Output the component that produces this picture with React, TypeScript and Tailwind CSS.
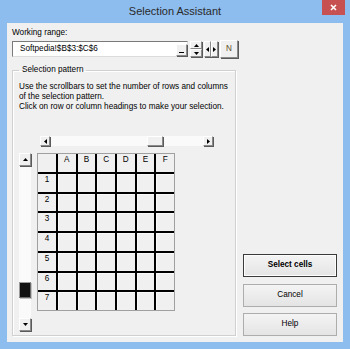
import React from "react";

const btn3d =
  "bg-[#f0f0f0] border border-t-white border-l-white border-r-[#8a8a8a] border-b-[#8a8a8a] shadow-[1px_1px_0_#5a5a5a]";

function Tri({ dir, size = 3 }: { dir: "up" | "down" | "left" | "right"; size?: number }) {
  const s = size;
  let pts = "";
  let w = s * 2 + 1;
  let h = s + 1;
  if (dir === "up") pts = `0,${h} ${w},${h} ${w / 2},0`;
  if (dir === "down") pts = `0,0 ${w},0 ${w / 2},${h}`;
  if (dir === "left" || dir === "right") {
    const t = w;
    w = h;
    h = t;
    pts = dir === "left" ? `${w},0 ${w},${h} 0,${h / 2}` : `0,0 0,${h} ${w},${h / 2}`;
  }
  return (
    <svg width={w} height={h} viewBox={`0 0 ${w} ${h}`}>
      <polygon points={pts} fill="#000" />
    </svg>
  );
}

const cols = ["A", "B", "C", "D", "E", "F"];
const rows = [1, 2, 3, 4, 5, 6, 7];

export default function App() {
  return (
    <div className="w-[350px] h-[349px] bg-[#8dbdee] flex flex-col font-['Liberation_Sans',Arial,sans-serif] text-black overflow-hidden">
      {/* title bar */}
      <div className="relative h-[23px] flex items-center justify-center shrink-0">
        <span className="text-[11px] text-[#2a2a2a] leading-none">Selection Assistant</span>
        <div className="absolute right-[5px] top-0 w-[23px] h-[15px] bg-[#c75050] flex items-center justify-center">
          <svg width="7" height="7" viewBox="0 0 7 7">
            <path d="M1 1 L6 6 M6 1 L1 6" stroke="#fff" strokeWidth="1.6" />
          </svg>
        </div>
      </div>

      {/* client area */}
      <div className="mx-[7px] mb-[7px] flex-1 bg-[#f0f0f0] px-[5px] pt-[5px] flex flex-col">
        <div className="text-[8.2px] leading-[10px]">Working range:</div>
        <div className="mt-[2px] flex items-center h-[18px]">
          <div className="w-[176px] h-[16px] bg-white border border-t-[#7a7a7a] border-l-[#7a7a7a] border-r-[#dcdcdc] border-b-[#dcdcdc] flex items-center">
            <span className="pl-[7px] text-[8.2px] leading-[10px]">Softpedia!$B$3:$C$6</span>
            <div className={`ml-auto self-end w-[11px] h-[12px] ${btn3d} flex items-end justify-center pb-[2px]`}>
              <div className="w-[5px] h-[1px] bg-black" />
            </div>
          </div>
          <div className="ml-[2px] w-[12px] h-[16px] flex flex-col">
            <div className={`h-[8px] ${btn3d} flex items-center justify-center`}>
              <Tri dir="up" size={2} />
            </div>
            <div className={`h-[8px] ${btn3d} flex items-center justify-center`}>
              <Tri dir="down" size={2} />
            </div>
          </div>
          <div className="ml-[2px] w-[14px] h-[16px] flex">
            <div className={`w-[7px] ${btn3d} flex items-center justify-center`}>
              <Tri dir="left" size={2} />
            </div>
            <div className={`w-[7px] ${btn3d} flex items-center justify-center`}>
              <Tri dir="right" size={2} />
            </div>
          </div>
          <div className={`ml-[2px] w-[18px] h-[18px] ${btn3d} flex items-center justify-center`}>
            <span className="text-[8.2px] leading-none text-[#5e4d22]">N</span>
          </div>
        </div>

        <div className="mt-[7px] flex">
          <fieldset className="w-[224px] border border-[#d0d0d0] shadow-[inset_1px_1px_0_#fff,1px_1px_0_#fff] px-[6px] pb-[4px]">
            <legend className="ml-0 px-[3px] text-[8.2px] leading-[10px]">Selection pattern</legend>
            <div className="pt-[7px] text-[8.2px] leading-[10px]">
              <div>Use the scrollbars to set the number of rows and columns</div>
              <div>of the selection pattern.</div>
              <div>Click on row or column headings to make your selection.</div>
            </div>

            {/* horizontal scrollbar */}
            <div className="mt-[24px] ml-[21px] w-[173px] h-[10px] bg-[#fafafa] flex">
              <div className={`w-[10px] h-[10px] ${btn3d} flex items-center justify-center`}>
                <Tri dir="left" size={2} />
              </div>
              <div className="flex-1 flex">
                <div className="w-[97px]" />
                <div className={`w-[16px] h-[10px] ${btn3d}`} />
              </div>
              <div className={`w-[10px] h-[10px] ${btn3d} flex items-center justify-center`}>
                <Tri dir="right" size={2} />
              </div>
            </div>

            <div className="mt-[7px] flex">
              {/* vertical scrollbar */}
              <div className="w-[12px] h-[178px] bg-[#fafafa] flex flex-col">
                <div className={`h-[13px] ${btn3d} flex items-center justify-center`}>
                  <Tri dir="up" size={2} />
                </div>
                <div className="flex-1 flex flex-col">
                  <div className="h-[116px]" />
                  <div className="h-[16px] bg-[#111] border border-t-[#9a9a9a] border-l-[#9a9a9a] border-r-[#6a6a6a] border-b-[#6a6a6a] shadow-[1px_1px_0_#c0c0c0]" />
                </div>
                <div className={`h-[13px] ${btn3d} flex items-center justify-center`}>
                  <Tri dir="down" size={2} />
                </div>
              </div>

              {/* grid */}
              <div className="ml-[6px] h-[158px] w-[138px] bg-black border border-[#a0a0a0] grid grid-cols-[18px_repeat(6,minmax(0,1fr))] grid-rows-[repeat(8,minmax(0,1fr))] gap-[2px]">
                <div className="bg-[#f0f0f0]" />
                {cols.map((c) => (
                  <div key={c} className="bg-[#f0f0f0] text-[8.2px] leading-[10px] text-center pt-[1px]">
                    {c}
                  </div>
                ))}
                {rows.map((r) => (
                  <React.Fragment key={r}>
                    <div className="bg-[#f0f0f0] text-[8.2px] leading-[10px] text-center pt-[1px]">{r}</div>
                    {cols.map((c) => (
                      <div key={c} className="bg-[#f0f0f0] shadow-[inset_1px_1px_0_#fafafa]" />
                    ))}
                  </React.Fragment>
                ))}
              </div>
            </div>
          </fieldset>

          <div className="ml-[7px] w-[94px] flex flex-col justify-end">
            <button className="h-[23px] border border-[#3a3a3a] bg-gradient-to-b from-[#f4f4f4] to-[#e4e4e4] shadow-[inset_0_0_0_1px_#fdfdfd] text-[8.2px] font-bold">
              Select cells
            </button>
            <button className="mt-[7px] h-[23px] border border-[#adadad] bg-gradient-to-b from-[#f4f4f4] to-[#e4e4e4] text-[8.2px]">
              Cancel
            </button>
            <button className="mt-[6px] h-[23px] border border-[#adadad] bg-gradient-to-b from-[#f4f4f4] to-[#e4e4e4] text-[8.2px]">
              Help
            </button>
          </div>
        </div>
      </div>
    </div>
  );
}
